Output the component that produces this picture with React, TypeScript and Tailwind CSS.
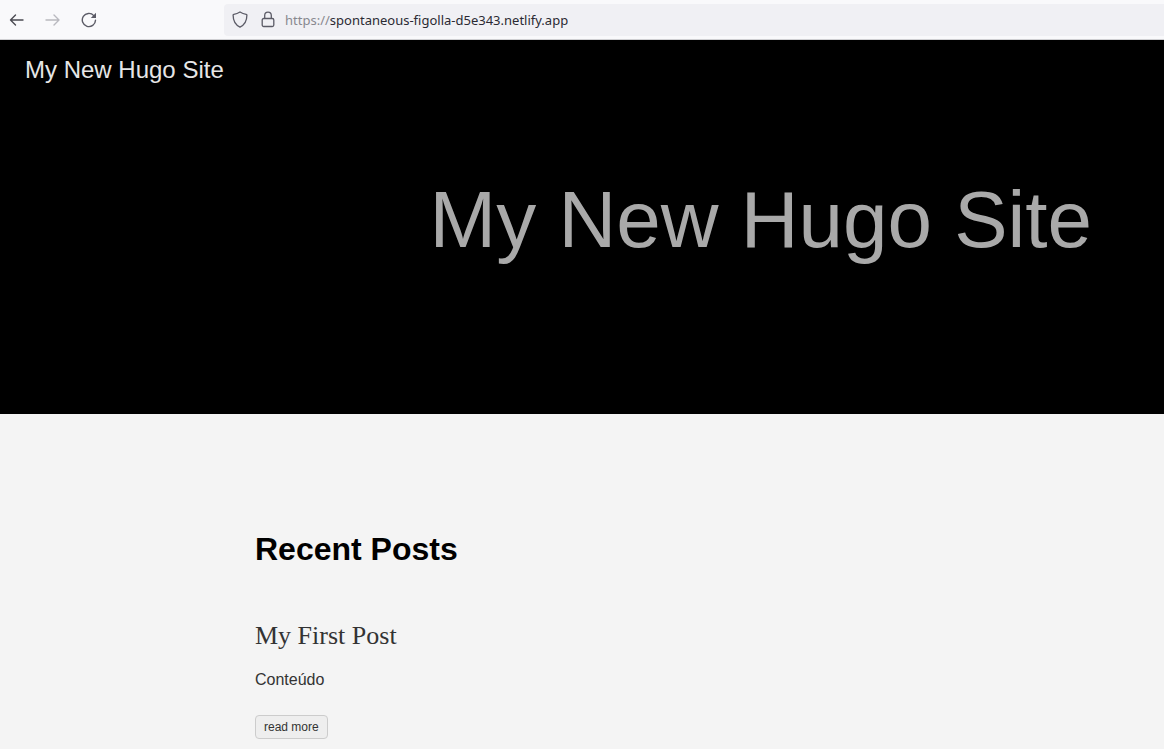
type Post = {
  title: string;
  summary: string;
  href: string;
};

const siteTitle = "My New Hugo Site";

const posts: Post[] = [
  { title: "My First Post", summary: "Conteúdo", href: "#my-first-post" },
];

const sans = "font-['Liberation_Sans',Arial,sans-serif]";
const serif = "font-['Liberation_Serif',Georgia,serif]";
const chrome = "font-['Noto_Sans','Segoe_UI',sans-serif]";

function BrowserBar() {
  return (
    <div className="flex h-10 items-center border-b border-[#cfcfd2] bg-[#f9f9fb] text-[#5b5b66]">
      <div className="flex w-56 shrink-0 items-center gap-5 pl-2">
        <button aria-label="Back" className="text-[#4a4a52]">
          <svg width="16" height="16" viewBox="0 0 16 16" fill="none" stroke="currentColor" strokeWidth="1.4" strokeLinecap="round" strokeLinejoin="round">
            <path d="M15 8H2.5M7.5 3l-5 5 5 5" />
          </svg>
        </button>
        <button aria-label="Forward" disabled className="text-[#b9b9bf]">
          <svg width="16" height="16" viewBox="0 0 16 16" fill="none" stroke="currentColor" strokeWidth="1.4" strokeLinecap="round" strokeLinejoin="round">
            <path d="M2 8h13M10 3l5 5-5 5" />
          </svg>
        </button>
        <button aria-label="Reload">
          <svg width="18" height="16" viewBox="0 0 18 16" fill="none" stroke="currentColor" strokeWidth="1.4" strokeLinecap="round" strokeLinejoin="round">
            <path d="M13.800 3.600A6.600 6.600 0 1 0 15.500 8.200" />
            <path d="M16 .800v5.200h-5.200z" fill="currentColor" stroke="none" />
          </svg>
        </button>
      </div>
      <div className="flex h-8 min-w-0 flex-1 items-center rounded-l bg-[#f0f0f4] pl-2">
        <svg width="16" height="18" viewBox="0 0 16 18" fill="none" stroke="currentColor" strokeWidth="1.3" strokeLinejoin="round" className="shrink-0">
          <path d="M8 1c2 1.300 4 2 6.200 2.300.4.100.7.400.7.800 0 6-2.500 10-6.900 12C3.600 14.100 1.100 10.100 1.100 4.100c0-.4.300-.7.700-.8C4 3 6 2.300 8 1z" />
        </svg>
        <svg width="16" height="18" viewBox="0 0 16 18" fill="none" stroke="currentColor" strokeWidth="1.3" strokeLinejoin="round" className="ml-3 shrink-0">
          <rect x="2.200" y="7.500" width="11.600" height="8" rx="1.500" />
          <path d="M4.700 7.500V4.400a3.300 3.300 0 0 1 6.600 0v3.100" />
        </svg>
        <p className={`ml-2 truncate pt-px pl-px text-[13px] leading-5 ${chrome} text-[#88888f]`}>
          https://
          <span className="text-[#2b2a33]">spontaneous-figolla-d5e343.netlify.app</span>
        </p>
      </div>
    </div>
  );
}

function Hero() {
  return (
    <header className="bg-black pb-[154px]">
      <nav className="px-[25px] py-3">
        <a href="#" className="text-2xl leading-9 text-[#e6e6e6]">
          {siteTitle}
        </a>
      </nav>
      <h1 className="pt-20 pr-18 text-right text-[80px] leading-20 text-[#a9a9a9]">
        {siteTitle}
      </h1>
    </header>
  );
}

function PostSummary({ post }: { post: Post }) {
  return (
    <article className="flex flex-col items-start">
      <h2 className={`text-[26px] leading-8 text-[#333] ${serif}`}>
        <a href={post.href}>{post.title}</a>
      </h2>
      <p className="mt-4 text-base leading-6 text-[#333]">{post.summary}</p>
      <a
        href={post.href}
        className="mt-[23px] rounded border border-[#ccc] bg-[#eee] px-2 text-xs leading-[22px] text-[#333]"
      >
        read more
      </a>
    </article>
  );
}

export default function App() {
  return (
    <div className={`min-h-screen bg-[#f4f4f4] ${sans}`}>
      <BrowserBar />
      <Hero />
      <main className="mx-auto max-w-[654px] pt-28 pb-2">
        <h1 className="text-[32px] leading-[46px] font-bold text-black">Recent Posts</h1>
        <section className="mt-12">
          {posts.map((post) => (
            <PostSummary key={post.href} post={post} />
          ))}
        </section>
      </main>
    </div>
  );
}
